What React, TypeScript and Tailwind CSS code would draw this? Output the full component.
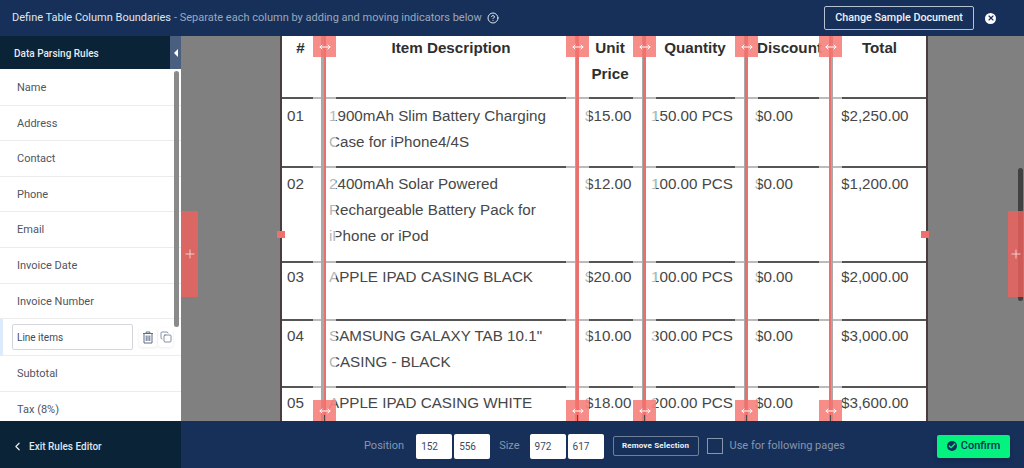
import { Check, ChevronLeft, Copy, MoveHorizontal, Plus, CircleHelp, X } from 'lucide-react';

const FIELDS_TOP = ['Name', 'Address', 'Contact', 'Phone', 'Email', 'Invoice Date', 'Invoice Number'];
const FIELDS_BOTTOM = ['Subtotal', 'Tax (8%)'];

const COLS = 'grid grid-cols-[41px_256px_67px_101px_84px_97px]';

const ROWS = [
  { no: '01', item: ['1900mAh Slim Battery Charging', 'Case for iPhone4/4S'], price: '$15.00', qty: '150.00 PCS', total: '$2,250.00', h: 'h-[69px] pt-[4px]' },
  { no: '02', item: ['2400mAh Solar Powered', 'Rechargeable Battery Pack for', 'iPhone or iPod'], price: '$12.00', qty: '100.00 PCS', total: '$1,200.00', h: 'h-[95px] pt-[3px]' },
  { no: '03', item: ['APPLE IPAD CASING BLACK'], price: '$20.00', qty: '100.00 PCS', total: '$2,000.00', h: 'h-[58px] pt-[1px]' },
  { no: '04', item: ['SAMSUNG GALAXY TAB 10.1"', 'CASING - BLACK'], price: '$10.00', qty: '300.00 PCS', total: '$3,000.00', h: 'h-[67px] pt-[2px]' },
  { no: '05', item: ['APPLE IPAD CASING WHITE'], price: '$18.00', qty: '200.00 PCS', total: '$3,600.00', h: 'h-[69px] pt-[2px]' },
];

// column dividers, x is relative to the canvas
const DIVIDERS = [
  { x: 'left-[132px]', bar: 'left-[8px] flex-row-reverse', red: 'w-[2px]', gray: 'w-[3px]' },
  { x: 'left-[385px]', bar: 'left-[9px] flex-row-reverse', red: 'w-[3px]', gray: 'w-px' },
  { x: 'left-[452px]', bar: 'left-[9px] flex-row-reverse', red: 'w-[3px]', gray: 'w-px' },
  { x: 'left-[554px]', bar: 'left-[9px] flex-row-reverse', red: 'w-[3px]', gray: 'w-px' },
  { x: 'left-[638px]', bar: 'left-[10px] flex-row', red: 'w-[2px]', gray: 'w-[2px]' },
];

function Divider({ x, bar, red, gray }: { x: string; bar: string; red: string; gray: string }) {
  return (
    <div className={`absolute top-0 bottom-0 w-[23px] ${x}`}>
      <div className="absolute inset-0 bg-white/60" />
      <div className={`absolute top-0 bottom-0 flex ${bar}`}>
        <div className={`${red} bg-[#e9716d]`} />
        <div className={`${gray} bg-[#a9a9a9]`} />
      </div>
      <div className="absolute top-0 left-0 flex h-[21px] w-[23px] items-center justify-center bg-[#f5716c]/80">
        <MoveHorizontal className="h-3 w-3 text-white" strokeWidth={2} />
      </div>
      <div className="absolute bottom-0 left-0 flex h-[21px] w-[23px] items-center justify-center bg-[#f5716c]/80">
        <MoveHorizontal className="h-3 w-3 text-white" strokeWidth={2} />
        <div className="absolute bottom-0 left-[11px] h-[6px] w-px bg-[#4a4a4a]" />
      </div>
    </div>
  );
}

function DocumentTable() {
  return (
    <div className="absolute top-[-2px] left-[99px] w-[648px] border-x-2 border-[#4a3c3c] bg-white font-['Liberation_Sans',sans-serif] text-[15.2px] leading-[26px] text-[#474747]">
      <div className={`${COLS} h-[63px] pt-px text-center font-bold text-[#2f2f2f]`}>
        <div className="pr-1">#</div>
        <div>Item Description</div>
        <div className="pr-[5px]">
          Unit
          <br />
          Price
        </div>
        <div className="pr-[3px]">Quantity</div>
        <div className="whitespace-nowrap pl-[1px]">Discount</div>
        <div>Total</div>
      </div>
      {ROWS.map((row) => (
        <div key={row.no} className={`${COLS} ${row.h} border-t-2 border-[#555555]`}>
          <div className="pl-[5px]">{row.no}</div>
          <div className="pl-[6px]">
            {row.item.map((line) => (
              <div key={line} className="whitespace-nowrap">{line}</div>
            ))}
          </div>
          <div className="pl-[6px]">{row.price}</div>
          <div className="pl-[5px]">{row.qty}</div>
          <div className="pl-[8px]">$0.00</div>
          <div className="pl-[10px]">{row.total}</div>
        </div>
      ))}
    </div>
  );
}

function FieldRow({ label }: { label: string }) {
  return (
    <div className="flex h-[35.6px] items-center border-b border-[#ececec] pl-[17px] pt-[2px] text-[11px] text-[#50555f]">
      {label}
    </div>
  );
}

function NumberBox({ value }: { value: string }) {
  return (
    <div className="flex h-[25px] w-[36px] items-center rounded-[2px] bg-white pl-[5px] text-[10px] text-[#3c4a60]">
      {value}
    </div>
  );
}

export default function App() {
  return (
    <div className="flex h-[468px] w-[1024px] flex-col overflow-hidden bg-[#808080] font-['Roboto',sans-serif]">
      {/* Top bar */}
      <header className="flex h-[36px] shrink-0 items-center bg-[#17305a] pl-3 pr-[28px]">
        <span className="text-[11px] text-[#dfe5ee]">Define Table Column Boundaries</span>
        <span className="ml-[3px] text-[11px] text-[#9aa8bd]">- Separate each column by adding and moving indicators below</span>
        <CircleHelp className="ml-[5px] h-3 w-3 text-[#dfe5ee]" />
        <button className="ml-auto flex h-[24px] w-[150px] items-center justify-center rounded-[2px] border border-[#b6c2d2] text-[10.75px] font-medium text-[#eef2f7]">
          Change Sample Document
        </button>
        <span className="ml-[11px] flex h-[11px] w-[11px] items-center justify-center rounded-full bg-white">
          <X className="h-2 w-2 text-[#17305a]" strokeWidth={3.5} />
        </span>
      </header>

      <div className="flex min-h-0 flex-1">
        {/* Rules sidebar */}
        <aside className="relative flex w-[181px] shrink-0 flex-col overflow-hidden bg-white">
          <div className="flex h-[33px] shrink-0 items-center justify-between bg-[#0a2336] pl-[14px]">
            <span className="pt-px text-[10px] font-medium text-[#e6ebf0]">Data Parsing Rules</span>
            <span className="flex h-full w-[11px] items-center justify-center bg-[#4a5f80]">
              <span className="h-0 w-0 border-y-[4px] border-r-[4px] border-y-transparent border-r-white" />
            </span>
          </div>
          <div className="pt-px">
            {FIELDS_TOP.map((field) => (
              <FieldRow key={field} label={field} />
            ))}
            <div className="flex h-[37px] items-center gap-[6px] border-b border-[#ececec] border-l-[3px] border-l-[#dceafc] pl-[9px]">
              <div className="flex h-[26px] w-[121px] items-center rounded-[2px] border border-[#d3d7dd] pl-[4px] pt-px text-[10px] text-[#3c4a60]">
                Line items
              </div>
              <span className="flex h-[19px] w-[18px] items-center justify-center rounded-[3px] bg-white shadow-[0_1px_3px_rgba(0,0,0,0.08)]">
                <svg viewBox="0 0 12 13" className="h-[13px] w-[12px] fill-none stroke-[#5c6d86]" strokeWidth="1">
                  <path d="M1 2.5h10M4.2 2.5V1h3.6v1.5M2 2.5v9.5h8V2.5M4.2 4.5v5.5M6 4.5v5.5M7.8 4.5v5.5" />
                </svg>
              </span>
              <span className="-ml-[5px] flex h-[19px] w-[15px] items-center justify-center rounded-[3px] bg-white shadow-[0_1px_3px_rgba(0,0,0,0.08)]">
                <Copy className="h-3 w-3 text-[#5c6d86]" strokeWidth={1.5} />
              </span>
            </div>
            {FIELDS_BOTTOM.map((field) => (
              <FieldRow key={field} label={field} />
            ))}
          </div>
          <div className="absolute top-[35px] left-[174px] h-[256px] w-[5px] rounded-full bg-[#8a8a8a]" />
        </aside>

        {/* Document canvas */}
        <main className="relative min-w-0 flex-1 overflow-hidden bg-[#808080]">
          <DocumentTable />
          {DIVIDERS.map((d) => (
            <Divider key={d.x} x={d.x} bar={d.bar} red={d.red} gray={d.gray} />
          ))}

          {/* row markers on the table edges */}
          <div className="absolute top-[195px] left-[96px] h-[7px] w-[8px] bg-[#f0706c]" />
          <div className="absolute top-[195px] left-[740px] h-[7px] w-[8px] bg-[#f0706c]" />

          <div className="absolute top-[132px] left-[837px] h-[133px] w-[5px] rounded-full bg-[#414141]" />

          {/* add-column strips */}
          <div className="absolute top-[175px] left-0 flex h-[86px] w-[17px] items-center justify-center bg-[#f0605b]/80">
            <Plus className="h-[14px] w-[14px] text-[#f3dcdb]" strokeWidth={1.5} />
          </div>
          <div className="absolute top-[175px] right-0 flex h-[86px] w-[16px] items-center justify-center bg-[#f0605b]/80">
            <Plus className="h-[14px] w-[14px] text-[#f3dcdb]" strokeWidth={1.5} />
          </div>
        </main>
      </div>

      {/* Bottom bar */}
      <footer className="flex h-[47px] shrink-0 bg-[#17305a]">
        <div className="flex w-[181px] shrink-0 items-center bg-[#0a2336] pl-[11px] pt-[3px]">
          <ChevronLeft className="h-[13px] w-[13px] text-[#e6ebf0]" strokeWidth={2.2} />
          <span className="ml-[5px] text-[10px] font-medium text-[#dfe5ee]">Exit Rules Editor</span>
        </div>
        <div className="flex flex-1 items-center pl-[183px] pr-[14px] pt-[3px]">
          <span className="text-[11px] text-[#8696ad]">Position</span>
          <div className="ml-[12px] flex gap-[2px]">
            <NumberBox value="152" />
            <NumberBox value="556" />
          </div>
          <span className="ml-[9px] text-[11px] text-[#8696ad]">Size</span>
          <div className="ml-[10px] flex gap-[2px]">
            <NumberBox value="972" />
            <NumberBox value="617" />
          </div>
          <button className="ml-[9px] flex h-[20px] w-[86px] items-center justify-center rounded-[2px] border border-[#6f7f98] text-[8px] font-bold tracking-[0.15px] text-[#eef2f7]">
            Remove Selection
          </button>
          <span className="ml-[8px] h-[16px] w-[16px] border border-[#8696ad]" />
          <span className="ml-[7px] text-[11px] text-[#8696ad]">Use for following pages</span>
          <button className="ml-auto flex h-[23px] w-[73px] items-center justify-center gap-[4px] rounded-[2px] bg-[#04f27e] text-[11px] font-medium text-[#12305a] shadow-[0_2px_5px_rgba(0,0,0,0.2)]">
            <span className="flex h-[10px] w-[10px] items-center justify-center rounded-full bg-[#12305a]">
              <Check className="h-2 w-2 text-[#04f27e]" strokeWidth={4} />
            </span>
            Confirm
          </button>
        </div>
      </footer>
    </div>
  );
}
